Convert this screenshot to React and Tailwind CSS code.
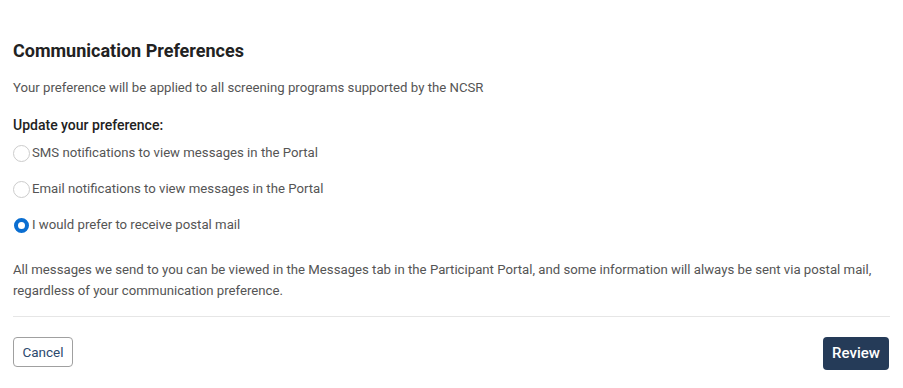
import React, { useState } from "react";

const options = [
  { id: "sms", label: "SMS notifications to view messages in the Portal" },
  { id: "email", label: "Email notifications to view messages in the Portal" },
  { id: "post", label: "I would prefer to receive postal mail" },
];

function Radio({ checked }) {
  return checked ? (
    <span className="flex h-[17px] w-[17px] shrink-0 items-center justify-center">
      <span className="h-[15px] w-[15px] rounded-full border-[4px] border-[#0a6ed1] bg-white" />
    </span>
  ) : (
    <span className="h-[17px] w-[17px] shrink-0 rounded-full border border-[#cccccc] bg-white" />
  );
}

export default function App() {
  const [value, setValue] = useState("post");
  return (
    <div className="min-h-[388px] w-full bg-white px-[13px] pt-[37px] font-['Roboto',sans-serif]">
      <h2 className="text-[18px] font-bold leading-[28px] text-[#222]">
        Communication Preferences
      </h2>
      <p className="mt-[12px] text-[13.2px] leading-[21px] text-[#555]">
        Your preference will be applied to all screening programs supported by the NCSR
      </p>
      <p className="mt-[17px] text-[14px] font-medium leading-[21px] text-[#222]">
        Update your preference:
      </p>
      <div className="mt-[-1px] flex flex-col">
        {options.map((o) => (
          <label
            key={o.id}
            className="flex h-[36px] cursor-pointer items-center gap-[2px] text-[13.2px] text-[#555]"
            onClick={() => setValue(o.id)}
          >
            <Radio checked={value === o.id} />
            <span>{o.label}</span>
          </label>
        ))}
      </div>
      <p className="mt-[16px] text-[13.2px] leading-[21px] text-[#555]">
        All messages we send to you can be viewed in the Messages tab in the Participant Portal, and some information will always be sent via postal mail, regardless of your communication preference.
      </p>
      <div className="mt-[15px] h-px w-full bg-[#e6e6e6]" />
      <div className="mt-[20px] flex items-start justify-between">
        <button className="h-[30px] w-[60px] rounded-[4px] border border-[#a0a0a0] bg-white text-[13.5px] text-[#2d4a6e]">
          Cancel
        </button>
        <button className="mr-px h-[33px] w-[66px] rounded-[4px] bg-[#253b58] text-[15px] font-medium text-white">
          Review
        </button>
      </div>
    </div>
  );
}
